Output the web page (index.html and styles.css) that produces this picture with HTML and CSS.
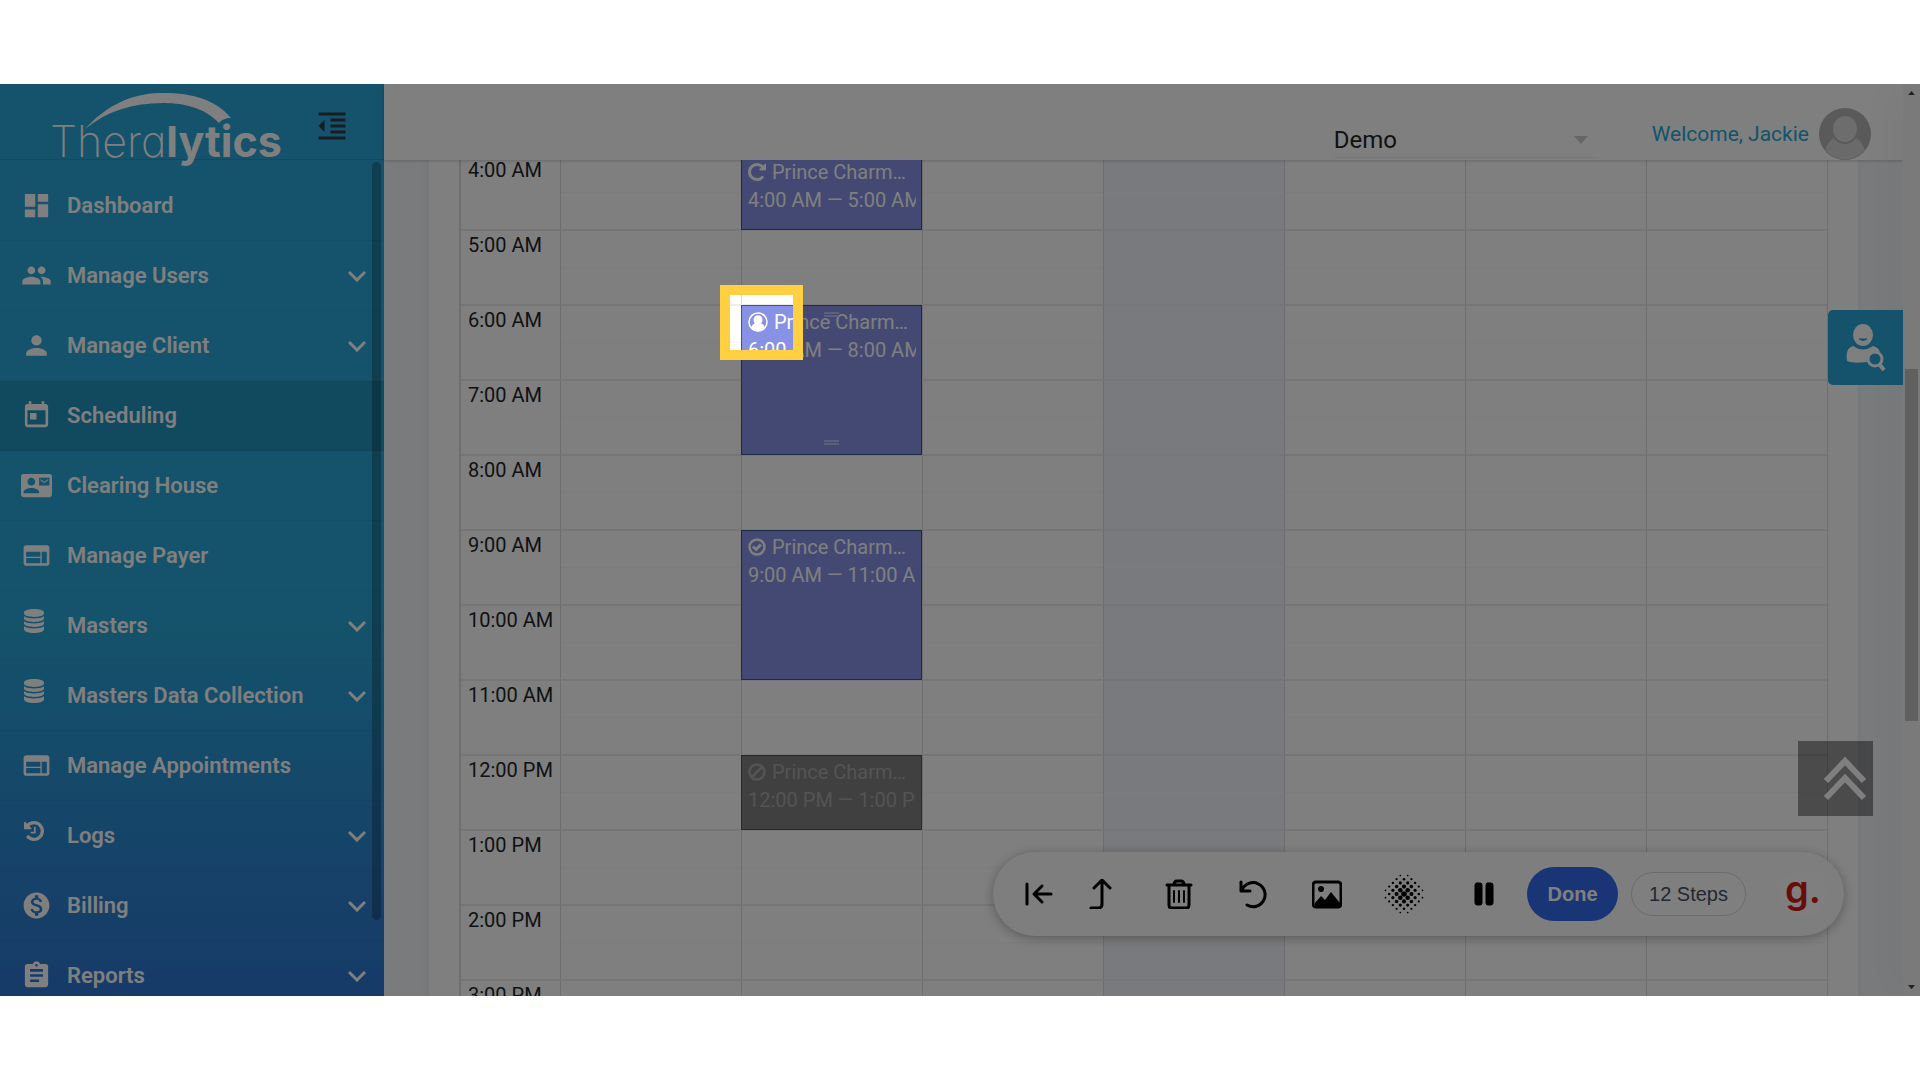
FILE: index.html
```html
<!DOCTYPE html>
<html lang="en">
<head>
    <meta charset="UTF-8">
    <meta name="viewport" content="width=device-width, initial-scale=1.0">
    <title>Theralytics - Scheduling</title>
    <link rel="stylesheet" href="styles.css">
</head>
<body>
    <div class="stage">
        <!-- Sidebar -->
        <aside class="sidebar">
            <div class="brand">
                <div class="logo">
                    <svg class="logo-arc" viewBox="0 0 146 36" aria-hidden="true"><path d="M0 36C22 12 46 1 74 0c34-1 58 8 72 25-5 0-10 2-12 5C122 17 104 10 78 10 48 10 22 18 0 36z"/></svg>
                    <span class="logo-text">Thera<b>lytics</b></span>
                </div>
                <button class="collapse" aria-label="Collapse menu">
                    <svg viewBox="0 0 24 24"><path d="M11 17h10v-2H11v2zm-8-5l4 4V8l-4 4zm0 9h18v-2H3v2zM3 3v2h18V3H3zm8 6h10V7H11v2zm0 4h10v-2H11v2z"/></svg>
                </button>
            </div>
            <nav class="menu">
                <a href="#" class="menu-item">
                    <svg class="icon" viewBox="0 0 24 24"><path d="M3 13h8V3H3v10zm0 8h8v-6H3v6zm10 0h8V11h-8v10zm0-18v6h8V3h-8z"/></svg>
                    <span>Dashboard</span>
                </a>
                <a href="#" class="menu-item has-sub">
                    <svg class="icon" viewBox="0 0 24 24"><path d="M16 11c1.66 0 2.99-1.34 2.99-3S17.66 5 16 5c-1.66 0-3 1.34-3 3s1.34 3 3 3zm-8 0c1.66 0 2.99-1.34 2.99-3S9.66 5 8 5C6.34 5 5 6.34 5 8s1.34 3 3 3zm0 2c-2.33 0-7 1.17-7 3.5V19h14v-2.5c0-2.33-4.67-3.5-7-3.5zm8 0c-.29 0-.62.02-.97.05 1.16.84 1.97 1.97 1.97 3.45V19h6v-2.5c0-2.33-4.67-3.5-7-3.5z"/></svg>
                    <span>Manage Users</span>
                    <svg class="chevron" viewBox="0 0 18 12"><path d="M1 2l8 8 8-8"/></svg>
                </a>
                <a href="#" class="menu-item has-sub">
                    <svg class="icon" viewBox="0 0 24 24"><path d="M12 12c2.21 0 4-1.79 4-4s-1.79-4-4-4-4 1.79-4 4 1.79 4 4 4zm0 2c-2.67 0-8 1.34-8 4v2h16v-2c0-2.66-5.33-4-8-4z"/></svg>
                    <span>Manage Client</span>
                    <svg class="chevron" viewBox="0 0 18 12"><path d="M1 2l8 8 8-8"/></svg>
                </a>
                <a href="#" class="menu-item active">
                    <svg class="icon" viewBox="0 0 24 24"><path d="M19 3h-1V1h-2v2H8V1H6v2H5c-1.11 0-1.99.9-1.99 2L3 19c0 1.1.89 2 2 2h14c1.1 0 2-.9 2-2V5c0-1.1-.9-2-2-2zm0 16H5V8h14v11zM7 10h5v5H7z"/></svg>
                    <span>Scheduling</span>
                </a>
                <a href="#" class="menu-item">
                    <svg class="icon" viewBox="0 0 24 24"><path d="M21 8V7l-3 2-3-2v1l3 2 3-2zm1-5H2C.9 3 0 3.9 0 5v14c0 1.1.9 2 2 2h20c1.1 0 1.99-.9 1.99-2L24 5c0-1.1-.9-2-2-2zM8 6c1.66 0 3 1.34 3 3s-1.34 3-3 3-3-1.34-3-3 1.34-3 3-3zm6 12H2v-1c0-2 4-3.1 6-3.1s6 1.1 6 3.1v1zm8-6h-8V6h8v6z"/></svg>
                    <span>Clearing House</span>
                </a>
                <a href="#" class="menu-item">
                    <svg class="icon" viewBox="0 0 24 24"><path d="M20 4H4c-1.1 0-1.99.9-1.99 2L2 18c0 1.1.9 2 2 2h16c1.1 0 2-.9 2-2V6c0-1.1-.9-2-2-2zm-5 14H4v-4h11v4zm0-5H4V9h11v4zm5 5h-4V9h4v9z"/></svg>
                    <span>Manage Payer</span>
                </a>
                <a href="#" class="menu-item has-sub">
                    <svg class="icon fa" viewBox="0 0 20 24"><path d="M10 0c5.500 0 10 1.600 10 3.400v1.200C20 6.500 15.500 8 10 8S0 6.500 0 4.600V3.400C0 1.600 4.500 0 10 0zM0 7.200C2 8.700 6 9.400 10 9.400s8-.7 10-2.200v2.400c0 1.900-4.500 3.400-10 3.400S0 11.500 0 9.600zM0 12.200c2 1.500 6 2.200 10 2.200s8-.7 10-2.200v2.400c0 1.900-4.500 3.400-10 3.400S0 16.500 0 14.600zM0 17.200c2 1.500 6 2.200 10 2.200s8-.7 10-2.200v3C20 22.500 15.500 24 10 24S0 22.500 0 20.200z"/></svg>
                    <span>Masters</span>
                    <svg class="chevron" viewBox="0 0 18 12"><path d="M1 2l8 8 8-8"/></svg>
                </a>
                <a href="#" class="menu-item has-sub">
                    <svg class="icon fa" viewBox="0 0 20 24"><path d="M10 0c5.500 0 10 1.600 10 3.400v1.200C20 6.500 15.500 8 10 8S0 6.500 0 4.600V3.400C0 1.600 4.500 0 10 0zM0 7.200C2 8.700 6 9.400 10 9.400s8-.7 10-2.200v2.400c0 1.900-4.500 3.400-10 3.400S0 11.500 0 9.600zM0 12.200c2 1.500 6 2.200 10 2.200s8-.7 10-2.200v2.400c0 1.900-4.500 3.400-10 3.400S0 16.500 0 14.600zM0 17.200c2 1.500 6 2.200 10 2.200s8-.7 10-2.200v3C20 22.500 15.500 24 10 24S0 22.500 0 20.200z"/></svg>
                    <span>Masters Data Collection</span>
                    <svg class="chevron" viewBox="0 0 18 12"><path d="M1 2l8 8 8-8"/></svg>
                </a>
                <a href="#" class="menu-item">
                    <svg class="icon" viewBox="0 0 24 24"><path d="M20 4H4c-1.1 0-1.99.9-1.99 2L2 18c0 1.1.9 2 2 2h16c1.1 0 2-.9 2-2V6c0-1.1-.9-2-2-2zm-5 14H4v-4h11v4zm0-5H4V9h11v4zm5 5h-4V9h4v9z"/></svg>
                    <span>Manage Appointments</span>
                </a>
                <a href="#" class="menu-item has-sub">
                    <svg class="icon fa" viewBox="128 128 1536 1536"><path d="M1664 896q0 156-61 298t-164 245-245 164-298 61q-172 0-327-72.500t-264-204.500q-7-10-6.500-22.500t8.500-20.500l137-138q10-9 25-9 16 2 23 12 73 95 179 147t225 52q104 0 198.500-40.500t163.500-109.500 109.500-163.500 40.500-198.500-40.500-198.500-109.500-163.500-163.500-109.500-198.500-40.500q-98 0-188 35.500t-160 101.500l137 138q31 30 14 69-17 40-59 40h-448q-26 0-45-19t-19-45v-448q0-42 40-59 39-17 69 14l130 129q107-101 244.500-156.500t284.500-55.500q156 0 298 61t245 164 164 245 61 298zm-640-288v448q0 14-9 23t-23 9h-320q-14 0-23-9t-9-23v-64q0-14 9-23t23-9h224v-352q0-14 9-23t23-9h64q14 0 23 9t9 23z"/></svg>
                    <span>Logs</span>
                    <svg class="chevron" viewBox="0 0 18 12"><path d="M1 2l8 8 8-8"/></svg>
                </a>
                <a href="#" class="menu-item has-sub">
                    <svg class="icon" viewBox="0 0 24 24"><path d="M12 2C6.480 2 2 6.480 2 12s4.480 10 10 10 10-4.480 10-10S17.520 2 12 2zm1.410 16.090V20h-2.670v-1.930c-1.710-.36-3.160-1.460-3.270-3.400h1.960c.1 1.050.82 1.870 2.650 1.870 1.960 0 2.400-.98 2.400-1.590 0-.83-.44-1.610-2.670-2.140-2.480-.6-4.180-1.620-4.180-3.670 0-1.720 1.390-2.840 3.110-3.210V4h2.670v1.950c1.860.45 2.790 1.860 2.850 3.390H14.300c-.05-1.110-.64-1.870-2.220-1.870-1.500 0-2.400.68-2.400 1.640 0 .84.65 1.390 2.670 1.910s4.180 1.390 4.180 3.910c-.01 1.830-1.380 2.830-3.120 3.160z"/></svg>
                    <span>Billing</span>
                    <svg class="chevron" viewBox="0 0 18 12"><path d="M1 2l8 8 8-8"/></svg>
                </a>
                <a href="#" class="menu-item has-sub">
                    <svg class="icon" viewBox="0 0 24 24"><path d="M19 3h-4.180C14.400 1.840 13.300 1 12 1c-1.300 0-2.400.84-2.820 2H5c-1.100 0-2 .9-2 2v14c0 1.100.9 2 2 2h14c1.100 0 2-.9 2-2V5c0-1.100-.9-2-2-2zm-7 0c.55 0 1 .45 1 1s-.45 1-1 1-1-.45-1-1 .45-1 1-1zm2 14H7v-2h7v2zm3-4H7v-2h10v2zm0-4H7V7h10v2z"/></svg>
                    <span>Reports</span>
                    <svg class="chevron" viewBox="0 0 18 12"><path d="M1 2l8 8 8-8"/></svg>
                </a>
            </nav>
            <div class="menu-thumb"></div>
        </aside>

        <!-- Header + calendar -->
        <div class="main">
            <header class="topbar">
                <select class="practice" aria-label="Practice">
                    <option>Demo</option>
                </select>
                <a href="#" class="welcome">Welcome, Jackie</a>
                <svg class="avatar" viewBox="0 0 52 52"><circle cx="26" cy="26" r="26" fill="#b4b4b4"/><path d="M6 42c3-8 7-12 11-13h18c4 1 8 5 11 13a26 26 0 0 1-40 0z" fill="#d4d4d4"/><ellipse cx="26" cy="21" rx="13" ry="14" fill="#dadada" stroke="#b4b4b4" stroke-width="2"/></svg>
            </header>
            <div class="content">
                <div class="card">
                    <table class="timegrid">
                        <colgroup><col class="axis-col"><col><col><col><col><col><col><col></colgroup>
                        <tbody id="hours"></tbody>
                    </table>
                </div>
            </div>
            <div class="drawer"></div>
            <button class="client-search" aria-label="Search client">
                <svg viewBox="0 0 40 48"><ellipse cx="17" cy="11" rx="10" ry="11"/><path d="M13 15q4 3 8 0z" fill="#28a7d6" stroke="#28a7d6" stroke-width="1"/><path d="M7 22q10 7 20 0c4 1 6 3 7 6-6-3-15 3-13 10-9 1-15 1-20-1C0 29 1 24 7 22z"/><circle cx="29" cy="35" r="7" fill="none" stroke="#fff" stroke-width="3"/><path d="M34 41l4 5" stroke="#fff" stroke-width="4"/></svg>
            </button>
            <button class="to-top" aria-label="Back to top">
                <svg viewBox="0 0 44 44"><path d="M3 24L22 4l19 20M3 41l19-20 19 20"/></svg>
            </button>
        </div>

        <div class="scrollbar">
            <svg viewBox="0 0 10 6"><path d="M5 0l5 6H0z"/></svg>
            <div class="scroll-thumb"></div>
            <svg viewBox="0 0 10 6"><path d="M0 0h10L5 6z"/></svg>
        </div>

        <!-- Recorder toolbar -->
        <div class="recorder">
            <button class="tool narrow" aria-label="To start"><svg viewBox="0 0 30 30"><path d="M3 5v20M27 15H11M18 7l-8 8 8 8"/></svg></button>
            <button class="tool narrow" aria-label="Previous step"><svg viewBox="0 0 30 30"><path d="M5 29h7q4 0 4-4V2M8 9l8-8 8 8"/></svg></button>
            <button class="tool group" aria-label="Delete"><svg viewBox="0 0 30 30"><path d="M3 6h24M5 7v19q0 3 3 3h14q3 0 3-3V7M10 6q0-4 3-4h4q3 0 3 4" /><path d="M10 12v11M15 12v11M20 12v11" stroke-width="2"/></svg></button>
            <button class="tool" aria-label="Restart"><svg viewBox="0 0 30 30"><path d="M3 3v9h9M4 11A12 12 0 1 1 9 26"/></svg></button>
            <button class="tool" aria-label="Screenshot"><svg viewBox="0 0 30 30"><rect x="1" y="3" width="28" height="25" rx="3"/><path d="M3 27v-3l6-7 4 4 6-8 9 11v3z" fill="#000" stroke="none"/><circle cx="9" cy="10" r="3" fill="#000" stroke="none"/></svg></button>
            <button class="tool wide" aria-label="Blur"><svg id="dots" class="dots" viewBox="-20 -20 40 40"></svg></button>
            <button class="tool wide" aria-label="Pause"><svg viewBox="0 0 30 30"><rect x="6" y="4" width="7" height="22" rx="2"/><rect x="17" y="4" width="7" height="22" rx="2"/></svg></button>
            <button class="done">Done</button>
            <button class="steps">12 Steps</button>
            <span class="guide">g.</span>
        </div>

        <div class="spotlight"></div>
    </div>

    <script>
        const icons = {
            repeat: '<svg viewBox="128 128 1536 1536"><path d="M1664 256v448q0 26-19 45t-45 19h-448q-42 0-59-40-17-39 14-69l138-138q-148-137-349-137-104 0-198.500 40.500t-163.500 109.500-109.500 163.500-40.500 198.500 40.500 198.500 109.500 163.500 163.500 109.500 198.500 40.500q119 0 225-52t179-147q7-10 23-12 15 0 25 9l137 138q9 8 9.500 20.500t-7.500 22.500q-109 132-264 204.500t-327 72.500q-156 0-298-61t-245-164-164-245-61-298 61-298 164-245 245-164 298-61q147 0 284.500 55.500t244.500 156.500l130-129q29-31 70-14 39 17 39 59z" fill="currentColor"/></svg>',
            user: '<svg class="big" viewBox="0 0 20 20"><circle cx="10" cy="10" r="9" fill="none" stroke="currentColor" stroke-width="1.5"/><ellipse cx="10" cy="8" rx="4.5" ry="4.800" fill="currentColor"/><path d="M3 16c1-3 2-4 4-4.500q3 2 6 0c2 .5 3 1.500 4 4.500a9 9 0 0 1-14 0z" fill="currentColor"/></svg>',
            check: '<svg viewBox="0 0 18 18"><g fill="none" stroke="currentColor"><circle cx="9" cy="9" r="7.500" stroke-width="2.500"/><path d="M5 8.500l3 3 5-5" stroke-width="3"/></g></svg>',
            ban: '<svg viewBox="0 0 18 18"><g fill="none" stroke="currentColor" stroke-width="2.500"><circle cx="9" cy="9" r="7.500"/><path d="M14 4L4 14"/></g></svg>'
        };

        const hours = ['4:00 AM', '5:00 AM', '6:00 AM', '7:00 AM', '8:00 AM', '9:00 AM',
            '10:00 AM', '11:00 AM', '12:00 PM', '1:00 PM', '2:00 PM', '3:00 PM'];
        const today = 3;

        // events all fall on the second day of the week
        const events = {
            '4:00 AM': { icon: 'repeat', end: '5:00 AM', cls: 'one' },
            '6:00 AM': { icon: 'user', end: '8:00 AM', cls: 'two resizable' },
            '9:00 AM': { icon: 'check', end: '11:00 AM', cls: 'two' },
            '12:00 PM': { icon: 'ban', end: '1:00 PM', cls: 'one cancelled' }
        };

        function eventHtml(start) {
            const ev = events[start];
            if (!ev) return '';
            return `<div class="event ${ev.cls}">
                <div class="event-title">${icons[ev.icon]}<span>Prince Charm…</span></div>
                <div class="event-time">${start} — ${ev.end}</div>
            </div>`;
        }

        document.getElementById('hours').innerHTML = hours.map(hour => {
            let cells = '';
            for (let day = 0; day < 7; day++) {
                cells += `<td${day === today ? ' class="today"' : ''}>${day === 1 ? eventHtml(hour) : ''}</td>`;
            }
            return `<tr><th scope="row">${hour}</th>${cells}</tr>`;
        }).join('');

        // halftone dots for the blur button
        let dots = '';
        for (let i = -5; i <= 5; i++) {
            for (let j = -5; j <= 5; j++) {
                if ((i + j) % 2) continue;
                const d = Math.hypot(i, j);
                if (d > 5.200) continue;
                dots += `<circle cx="${i * 3.700}" cy="${j * 3.700}" r="${2.800 - d * 0.380}"/>`;
            }
        }
        document.getElementById('dots').innerHTML = dots;
    </script>
</body>
</html>
```
FILE: styles.css
```css
* {
    box-sizing: border-box;
}
body {
    margin: 0;
    padding: 84px 0;
    height: 100vh;
    background: #fff;
    font-family: Roboto, "Liberation Sans", sans-serif;
    color: #212529;
}
button {
    border: none;
    padding: 0;
    background: none;
    font: inherit;
    cursor: pointer;
}
a {
    text-decoration: none;
}
svg {
    display: block;
    flex: none;
}
.stage {
    position: relative;
    display: flex;
    height: 100%;
    overflow: hidden;
}

/* sidebar */
.sidebar {
    position: relative;
    flex: none;
    width: 384px;
    overflow: hidden;
    color: #fff;
    background: linear-gradient(#28a7d6 0%, #28a7d6 58%, #2e74d0 100%);
}
.brand {
    display: flex;
    justify-content: space-between;
    align-items: flex-start;
    height: 76px;
    padding: 9px 34px 0 50px;
    border-bottom: 1px solid rgba(0, 0, 0, 0.1);
}
.logo {
    position: relative;
}
.logo-arc {
    position: absolute;
    left: 35px;
    top: 0;
    width: 146px;
    fill: #fff;
}
.logo-text {
    display: block;
    padding-top: 20px;
    font-family: Inter, sans-serif;
    font-size: 43px;
    line-height: 56px;
    font-weight: 200;
    font-feature-settings: "cv11";
}
.logo-text b {
    font-weight: 700;
}
.collapse svg {
    width: 36px;
    margin-top: 15px;
    fill: #2e3a46;
}
.menu {
    padding-top: 11px;
}
.menu-item {
    display: flex;
    align-items: center;
    height: 70px;
    padding: 0 18px 0 21px;
    border-bottom: 1px solid rgba(0, 0, 0, 0.04);
    font-size: 22px;
    line-height: 28px;
    font-weight: 600;
    color: #fff;
}
.menu-item.active {
    background: rgba(0, 0, 0, 0.12);
}
.icon {
    width: 31px;
    height: 31px;
    margin-right: 15px;
    fill: #fff;
}
.icon.fa {
    width: 20px;
    height: 24px;
    margin: 0 23px 10px 3px;
}
.chevron {
    width: 18px;
    height: 12px;
    margin-left: auto;
    fill: none;
    stroke: #fff;
    stroke-width: 3;
}
.menu-thumb {
    position: absolute;
    top: 78px;
    right: 3px;
    width: 9px;
    height: 758px;
    border-radius: 5px;
    background: rgba(0, 0, 0, 0.25);
}

/* header */
.main {
    position: relative;
    flex: 1;
    display: flex;
    flex-direction: column;
    min-width: 0;
}
.topbar {
    position: relative;
    z-index: 1;
    flex: none;
    display: flex;
    justify-content: flex-end;
    align-items: center;
    height: 76px;
    padding: 24px 32px 0 0;
    background: #fff;
    box-shadow: 0 1px 3px rgba(0, 0, 0, 0.2);
}
.practice {
    appearance: none;
    align-self: flex-end;
    width: 264px;
    height: 36px;
    margin: 0 54px 2px 0;
    padding: 0;
    border: none;
    border-bottom: 1px solid #f0f0f0;
    border-radius: 0;
    background: #fff url("data:image/svg+xml,%3Csvg xmlns='http://www.w3.org/2000/svg' viewBox='0 0 14 8'%3E%3Cpath d='M0 0h14L7 8z' fill='%23ccc'/%3E%3C/svg%3E") no-repeat right 10px center / 14px 8px;
    font: 24px/32px Roboto, sans-serif;
    color: #212529;
}
.welcome {
    font-size: 21px;
    line-height: 28px;
    color: #28a7d6;
}
.avatar {
    width: 52px;
    height: 52px;
    margin-left: 10px;
}

/* calendar */
.content {
    flex: 1;
    min-height: 0;
    overflow: hidden;
    padding: 0 45px;
    background: #f3f6fa;
}
.card {
    margin-top: -6px;
    padding: 0 30px;
    background: #fff;
    box-shadow: 0 0 12px rgba(0, 0, 0, 0.06);
}
.timegrid {
    width: 100%;
    table-layout: fixed;
    border-collapse: separate;
    border-spacing: 0;
    border-left: 2px solid #ddd;
    border-right: 1px solid #ddd;
}
.axis-col {
    width: 99px;
}
.timegrid th,
.timegrid td {
    position: relative;
    height: 75px;
    padding: 0;
    border-top: 2px solid #ededed;
}
.timegrid th {
    padding: 1px 0 0 7px;
    text-align: left;
    vertical-align: top;
    font-size: 20px;
    line-height: 26px;
    font-weight: 400;
}
.timegrid td {
    border-left: 1px solid #ddd;
    background: linear-gradient(#f8f8f8, #f8f8f8) no-repeat 0 36px / 100% 1px;
}
.timegrid td.today {
    background-color: #f1f5fa;
}
.event {
    position: absolute;
    z-index: 1;
    top: -1px;
    left: -1px;
    right: 0;
    padding: 0 5px 0 6px;
    border: 1px solid #38568a;
    background: #8792e5;
    font-size: 20px;
    line-height: 28px;
    color: #fff;
}
.event.one {
    height: 75px;
}
.event.two {
    height: 150px;
}
.event.cancelled {
    background: #808080;
    color: #a8a8a8;
}
.event-title {
    display: flex;
    align-items: center;
    gap: 6px;
    padding-top: 2px;
    white-space: nowrap;
}
.event-title svg {
    width: 18px;
    height: 18px;
}
.event-title svg.big {
    width: 20px;
    height: 20px;
}
.event-time {
    overflow: hidden;
    white-space: nowrap;
}
.resizable::before,
.resizable::after {
    content: "";
    position: absolute;
    left: 50%;
    width: 15px;
    height: 1px;
    margin-left: -8px;
    border: solid #b9c0f0;
    border-width: 2px 0;
}
.resizable::before {
    top: 6px;
}
.resizable::after {
    bottom: 9px;
}

/* floating controls on the right edge */
.drawer {
    position: absolute;
    z-index: 2;
    top: 0;
    right: 0;
    bottom: 0;
    width: 0;
    box-shadow: 0 0 40px 2px rgba(0, 0, 0, 0.3);
}
.client-search {
    position: absolute;
    z-index: 3;
    top: 226px;
    right: 0;
    width: 75px;
    height: 75px;
    padding-left: 18px;
    border-radius: 5px 0 0 5px;
    background: #28a7d6;
}
.client-search svg {
    width: 40px;
    fill: #fff;
}
.to-top {
    position: absolute;
    z-index: 3;
    right: 30px;
    bottom: 180px;
    width: 75px;
    height: 75px;
    padding-left: 25px;
    background: rgba(0, 0, 0, 0.41);
}
.to-top svg {
    width: 44px;
    fill: none;
    stroke: #fff;
    stroke-width: 6;
}
.scrollbar {
    position: relative;
    z-index: 3;
    flex: none;
    display: flex;
    flex-direction: column;
    align-items: center;
    justify-content: space-between;
    width: 17px;
    padding: 7px 0;
    background: #f4f4f4;
}
.scrollbar svg {
    width: 7px;
    fill: #444;
}
.scroll-thumb {
    width: 13px;
    height: 352px;
    margin-top: 10px;
    background: #c1c1c1;
}

/* recorder toolbar */
.recorder {
    position: absolute;
    z-index: 4;
    right: 76px;
    bottom: 60px;
    display: flex;
    align-items: center;
    height: 84px;
    padding: 0 18px 0 15px;
    border-radius: 42px;
    background: #fcfcfc;
    box-shadow: 0 2px 12px rgba(0, 0, 0, 0.3);
    font-family: "Liberation Sans", sans-serif;
    font-size: 20px;
}
.tool {
    display: flex;
    justify-content: center;
    width: 74px;
}
.tool.narrow {
    width: 62px;
}
.tool.wide {
    width: 80px;
}
.tool.group {
    margin-left: 10px;
}
.tool svg {
    width: 30px;
    height: 30px;
    fill: none;
    stroke: #000;
    stroke-width: 3;
    stroke-linecap: round;
    stroke-linejoin: round;
}
.tool svg.dots {
    width: 40px;
    height: 40px;
    fill: #000;
    stroke: none;
}
.tool rect[width="7"] {
    fill: #000;
    stroke-width: 1;
}
.done {
    width: 91px;
    height: 54px;
    margin-left: 3px;
    border-radius: 27px;
    background: #356bea;
    font-weight: 700;
    color: #fff;
}
.steps {
    width: 115px;
    height: 44px;
    margin-left: 13px;
    border: 1px solid #d3d8de;
    border-radius: 22px;
    background: #fff;
    color: #4a5068;
}
.guide {
    width: 46px;
    height: 46px;
    margin-left: 34px;
    border-radius: 50%;
    background: #fff;
    font: 600 38px/36px Inter, sans-serif;
    text-align: center;
    color: #d01c14;
}

/* dims everything except the highlighted spot */
.spotlight {
    position: absolute;
    z-index: 5;
    left: 720px;
    top: 201px;
    width: 83px;
    height: 75px;
    border: 10px solid #ffd042;
    box-shadow: 0 0 0 9999px rgba(0, 0, 0, 0.5);
    pointer-events: none;
}
```
